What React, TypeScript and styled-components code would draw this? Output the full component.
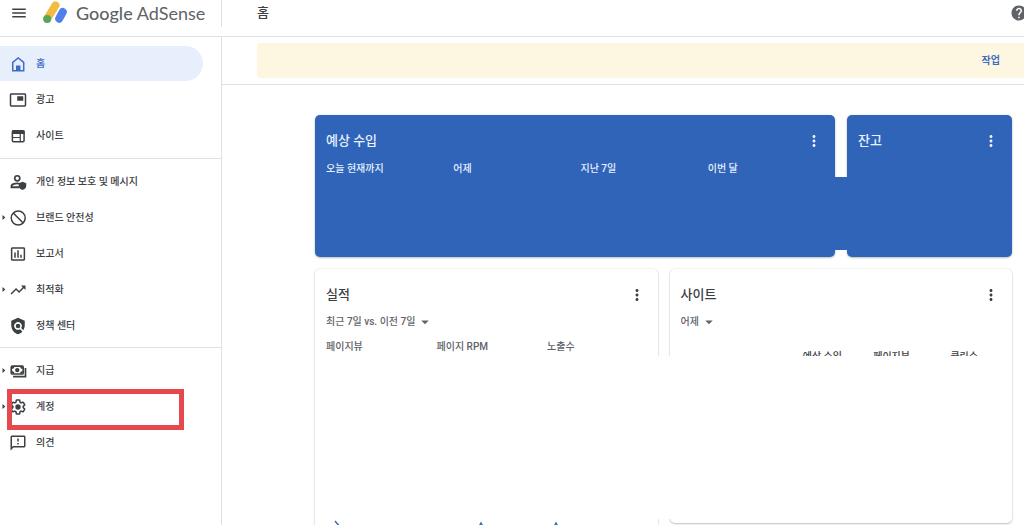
import React from 'react';
import styled, { createGlobalStyle, css } from 'styled-components';
import {
  MdArrowDropDown,
  MdHelp,
  MdInsertChartOutlined,
  MdMenu,
  MdMoreVert,
  MdOutlineFeedback,
  MdPictureInPicture,
  MdPolicy,
  MdTrendingUp,
} from 'react-icons/md';

const color = {
  text: '#3c4043',
  muted: '#5f6368',
  line: '#e0e1e4',
  link: '#3f6cc4',
  active: '#e8effc',
  card: '#2f64b9',
  notice: '#fdf6e0',
  mark: '#e5484d',
};

const GlobalStyle = createGlobalStyle`
  *, *::before, *::after { box-sizing: border-box; }
  body {
    margin: 0;
    background: #fff;
    color: ${color.text};
    font: 500 10px/16px Roboto, "Noto Sans CJK KR", sans-serif;
  }
  h1, h2, ul { margin: 0; padding: 0; font-weight: inherit; }
  ul { list-style: none; }
  a { color: inherit; text-decoration: none; }
  button { border: 0; padding: 0; background: none; color: inherit; font: inherit; cursor: pointer; }
  svg { display: block; flex: none; }
`;

const Page = styled.div`
  display: flex;
  flex-direction: column;
  height: 100vh;
  overflow: hidden;
`;

const Header = styled.header`
  display: flex;
  flex: none;
  height: 37px;
  padding-bottom: 9px;
  border-bottom: 1px solid ${color.line};
`;

const Brand = styled.div`
  display: flex;
  align-items: center;
  width: 222px;
  padding: 0 0 2px 10px;
  border-right: 1px solid ${color.line};
`;

const LogoLink = styled.a`
  display: flex;
  align-items: center;
  gap: 9px;
  margin-left: 15px;
  color: ${color.muted};
  font: 400 18px/24px Lato, sans-serif;

  b { font-weight: 500; }
`;

const TopBar = styled.div`
  display: flex;
  flex: 1;
  align-items: center;
  justify-content: space-between;
  padding: 0 0 2px 35px;
  margin-right: -4px;
`;

const PageTitle = styled.h1`
  font-size: 13px;
  line-height: 20px;
`;

const Body = styled.div`
  display: flex;
  flex: 1;
  min-height: 0;
`;

const Sidebar = styled.nav`
  flex: none;
  width: 222px;
  border-right: 1px solid ${color.line};
`;

const NavGroup = styled.ul<{ $first?: boolean }>`
  display: flex;
  flex-direction: column;
  gap: 1px;
  padding: ${(p) => (p.$first ? '9px 0 5px' : '5px 0 4px')};

  & + & { border-top: 1px solid ${color.line}; }
`;

const NavEntry = styled.li<{ $marked?: boolean }>`
  position: relative;
  margin-right: 18px;

  ${(p) =>
    p.$marked &&
    css`
      &::after {
        content: '';
        position: absolute;
        inset: 0 19px -6px 7px;
        border: 5px solid ${color.mark};
        pointer-events: none;
      }
    `}
`;

const NavLink = styled.a<{ $active?: boolean }>`
  display: flex;
  align-items: center;
  height: 35px;
  border-radius: 0 18px 18px 0;
  background: ${(p) => (p.$active ? color.active : 'transparent')};
  color: ${(p) => (p.$active ? color.link : color.text)};
`;

const NavIcon = styled.span`
  margin-right: 9px;
`;

const ExpandSlot = styled.span`
  width: 9px;
`;

const Main = styled.main`
  flex: 1;
  min-width: 0;
`;

const NoticeArea = styled.section`
  padding: 6px 0 6px 35px;
  border-bottom: 1px solid ${color.line};
`;

const Notice = styled.div`
  display: flex;
  align-items: center;
  justify-content: flex-end;
  height: 35px;
  padding-right: 24px;
  border-radius: 4px 0 0 4px;
  background: ${color.notice};
`;

const NoticeAction = styled.button`
  color: ${color.link};
  font-weight: 700;
`;

const Dashboard = styled.div`
  display: flex;
  flex-direction: column;
  gap: 12px;
  padding: 30px 12px 0 93px;
`;

const CardRow = styled.div<{ $columns: string }>`
  position: relative;
  display: grid;
  grid-template-columns: ${(p) => p.$columns};
  align-items: start;
  gap: 12px;
`;

const Card = styled.section<{ $blue?: boolean; $height: number }>`
  min-height: ${(p) => p.$height}px;
  padding: 16px 0 0 11px;
  border-radius: 5px;
  background: ${(p) => (p.$blue ? color.card : '#fff')};
  color: ${(p) => (p.$blue ? '#e9f1ff' : color.text)};
  box-shadow: 0 1px 2px rgba(60, 64, 67, 0.3), 0 0 2px rgba(60, 64, 67, 0.15);
`;

const CardHead = styled.div`
  display: flex;
  align-items: center;
  justify-content: space-between;
  height: 20px;
  padding-right: 12px;
`;

const CardTitle = styled.h2`
  font-size: 13px;
  line-height: 20px;
`;

const Metrics = styled.ul<{ $count: number; $muted?: boolean }>`
  display: grid;
  grid-template-columns: repeat(${(p) => p.$count}, 1fr);
  margin-top: ${(p) => (p.$muted ? 8 : 10)}px;
  color: ${(p) => (p.$muted ? color.muted : 'inherit')};
`;

const Period = styled.label`
  display: flex;
  align-items: center;
  width: max-content;
  margin-top: 8px;
  color: ${color.muted};

  select {
    appearance: none;
    border: 0;
    padding: 0;
    background: none;
    color: inherit;
    font: inherit;
  }
`;

const SiteTable = styled.table`
  width: 100%;
  margin-top: 18px;
  padding-right: 34px;
  border-collapse: separate;
  border-spacing: 0;

  th {
    width: 68px;
    padding: 0;
    font-weight: 500;
    text-align: right;
  }
  th:first-child { width: auto; }
`;

/* Solid patch joining the two revenue cards over their figures. */
const BluePatch = styled.div`
  position: absolute;
  top: 62px;
  right: 160px;
  width: 24px;
  height: 73px;
  background: ${color.card};
`;

/* White patch hiding the figures of the lower cards. */
const WhitePatch = styled.div`
  position: absolute;
  top: 87px;
  left: 1px;
  right: 1px;
  height: 163px;
  background: #fff;
`;

const Chart = styled.svg`
  width: 100%;
  height: 60px;
  margin-top: 164px;
`;

const Logo = () => (
  <svg width="24" height="24" viewBox="0 0 24 24" fill="none" strokeWidth="8" strokeLinecap="round" aria-hidden="true">
    <path d="M12.5 4.400 4.400 17.500" stroke="#f2bc42" />
    <path d="M19.800 11 16.200 17.700" stroke="#4f80ea" />
    <circle cx="4.200" cy="18" r="4" fill="#58a55c" />
  </svg>
);

const HomeIcon = () => (
  <svg width="18" height="18" viewBox="0 0 24 24" aria-hidden="true">
    <path d="M5 21V9.800l7.300-6 7.300 6V21z" fill="none" stroke="currentColor" strokeWidth="2" />
    <path d="M9.300 21v-7h6v7z" fill="currentColor" />
  </svg>
);

const SiteIcon = () => (
  <svg width="18" height="18" viewBox="0 0 24 24" aria-hidden="true">
    <rect x="4.500" y="5" width="15.600" height="14.500" rx="1.500" fill="none" stroke="currentColor" strokeWidth="2" />
    <path d="M4 4.500h16.600v4.800H4z" fill="currentColor" />
    <path d="M4.500 14h10.200M15 9v10" fill="none" stroke="currentColor" strokeWidth="1.600" />
  </svg>
);

const PrivacyIcon = () => (
  <svg width="18" height="18" viewBox="0 0 24 24" aria-hidden="true">
    <circle cx="11" cy="7" r="3.400" fill="none" stroke="currentColor" strokeWidth="2.200" />
    <path d="M13.500 14.200c-4.600-.8-10.200.7-10.200 3.400V19h10.400" fill="none" stroke="currentColor" strokeWidth="2.400" />
    <path d="m18 11.500 5 2v3.400c0 2.900-2.100 4.700-5 5.600-2.900-.9-5-2.700-5-5.600v-3.400z" fill="currentColor" />
  </svg>
);

const BlockIcon = () => (
  <svg width="18" height="18" viewBox="0 0 24 24" fill="none" stroke="currentColor" strokeWidth="2" aria-hidden="true">
    <circle cx="12.300" cy="12" r="9.300" />
    <path d="m5.700 5.400 13.200 13.200" />
  </svg>
);

const PaymentsIcon = () => (
  <svg width="18" height="18" viewBox="0 0 24 24" fill="none" stroke="currentColor" strokeWidth="2.200" aria-hidden="true">
    <rect x="3" y="5.500" width="16" height="10.500" rx="1.500" />
    <path d="M22 8v11.500H5.500" />
    <circle cx="11" cy="10.800" r="2.900" fill="currentColor" stroke="none" />
    <path d="M3.500 8.300c1.800 0 2.600-.8 2.600-2.600M18.500 8.300c-1.800 0-2.600-.8-2.600-2.600M3.500 13.200c1.800 0 2.600.8 2.600 2.600M18.500 13.200c-1.800 0-2.600.8-2.600 2.600" />
  </svg>
);

const GearIcon = () => (
  <svg width="18" height="18" viewBox="0 0 24 24" aria-hidden="true">
    <path
      transform="translate(.96 .96) scale(.92)"
      fill="none"
      stroke="currentColor"
      strokeWidth="2.200"
      strokeLinejoin="round"
      d="M19.43 12.98c.04-.32.07-.64.07-.98s-.03-.66-.07-.98l2.11-1.65c.19-.15.24-.42.12-.64l-2-3.46a.5.5 0 0 0-.61-.22l-2.49 1c-.52-.4-1.08-.73-1.69-.98l-.38-2.65A.488.488 0 0 0 14 2h-4c-.25 0-.46.18-.49.42l-.38 2.65c-.61.25-1.17.59-1.69.98l-2.49-1a.5.5 0 0 0-.61.22l-2 3.46c-.13.22-.07.49.12.64l2.11 1.65c-.04.32-.07.65-.07.98s.03.66.07.98l-2.11 1.65c-.19.15-.24.42-.12.64l2 3.46c.12.22.39.3.61.22l2.49-1c.52.4 1.08.73 1.69.98l.38 2.65c.03.24.24.42.49.42h4c.25 0 .46-.18.49-.42l.38-2.65c.61-.25 1.17-.59 1.69-.98l2.49 1c.23.09.49 0 .61-.22l2-3.46c.12-.22.07-.49-.12-.64z"
    />
    <circle cx="12" cy="12" r="3.600" fill="currentColor" />
  </svg>
);

const ExpandArrow = () => (
  <svg width="9" height="9" viewBox="0 0 9 9" aria-hidden="true">
    <path d="M2.500 2v5l2.800-2.500z" fill="currentColor" />
  </svg>
);

type Item = { label: string; icon: React.ReactNode; expandable?: boolean; active?: boolean; marked?: boolean };

const groups: Item[][] = [
  [
    { label: '홈', icon: <HomeIcon />, active: true },
    { label: '광고', icon: <MdPictureInPicture size={18} /> },
    { label: '사이트', icon: <SiteIcon /> },
  ],
  [
    { label: '개인 정보 보호 및 메시지', icon: <PrivacyIcon /> },
    { label: '브랜드 안전성', icon: <BlockIcon />, expandable: true },
    { label: '보고서', icon: <MdInsertChartOutlined size={18} /> },
    { label: '최적화', icon: <MdTrendingUp size={18} />, expandable: true },
    { label: '정책 센터', icon: <MdPolicy size={18} /> },
  ],
  [
    { label: '지급', icon: <PaymentsIcon />, expandable: true },
    { label: '계정', icon: <GearIcon />, expandable: true, marked: true },
    { label: '의견', icon: <MdOutlineFeedback size={18} /> },
  ],
];

const Heading = ({ title }: { title: string }) => (
  <CardHead>
    <CardTitle>{title}</CardTitle>
    <button type="button" aria-label={`${title} 옵션`}>
      <MdMoreVert size={18} />
    </button>
  </CardHead>
);

const PeriodSelect = ({ value }: { value: string }) => (
  <Period>
    <select aria-label="기간" defaultValue={value}>
      <option>{value}</option>
    </select>
    <MdArrowDropDown size={18} />
  </Period>
);

export default function App() {
  return (
    <Page>
      <GlobalStyle />
      <Header>
        <Brand>
          <button type="button" aria-label="메뉴">
            <MdMenu size={18} />
          </button>
          <LogoLink href="#">
            <Logo />
            <span>
              <b>Google</b> AdSense
            </span>
          </LogoLink>
        </Brand>
        <TopBar>
          <PageTitle>홈</PageTitle>
          <button type="button" aria-label="도움말">
            <MdHelp size={18} color={color.muted} />
          </button>
        </TopBar>
      </Header>
      <Body>
        <Sidebar>
          {groups.map((items, index) => (
            <NavGroup key={index} $first={index === 0}>
              {items.map((item) => (
                <NavEntry key={item.label} $marked={item.marked}>
                  <NavLink href="#" $active={item.active}>
                    <ExpandSlot>{item.expandable && <ExpandArrow />}</ExpandSlot>
                    <NavIcon>{item.icon}</NavIcon>
                    {item.label}
                  </NavLink>
                </NavEntry>
              ))}
            </NavGroup>
          ))}
        </Sidebar>
        <Main>
          <NoticeArea>
            <Notice>
              <NoticeAction type="button">작업</NoticeAction>
            </Notice>
          </NoticeArea>
          <Dashboard>
            <CardRow $columns="63fr 20fr">
              <Card $blue $height={142}>
                <Heading title="예상 수입" />
                <Metrics $count={4}>
                  <li>오늘 현재까지</li>
                  <li>어제</li>
                  <li>지난 7일</li>
                  <li>이번 달</li>
                </Metrics>
              </Card>
              <Card $blue $height={142}>
                <Heading title="잔고" />
              </Card>
              <BluePatch />
            </CardRow>
            <CardRow $columns="1fr 1fr">
              <Card $height={320}>
                <Heading title="실적" />
                <PeriodSelect value="최근 7일 vs. 이전 7일" />
                <Metrics $count={3} $muted>
                  <li>페이지뷰</li>
                  <li>페이지 RPM</li>
                  <li>노출수</li>
                </Metrics>
                <Chart fill="none" stroke={color.link} strokeWidth="1.500" aria-hidden="true">
                  <path d="M9 2 14 8 28 32 140 32 155 4 170 32 215 32 230 4 245 32" />
                </Chart>
              </Card>
              <Card $height={254}>
                <Heading title="사이트" />
                <PeriodSelect value="어제" />
                <SiteTable>
                  <thead>
                    <tr>
                      <th />
                      <th scope="col">예상 수입</th>
                      <th scope="col">페이지뷰</th>
                      <th scope="col">클릭수</th>
                    </tr>
                  </thead>
                </SiteTable>
              </Card>
              <WhitePatch />
            </CardRow>
          </Dashboard>
        </Main>
      </Body>
    </Page>
  );
}
